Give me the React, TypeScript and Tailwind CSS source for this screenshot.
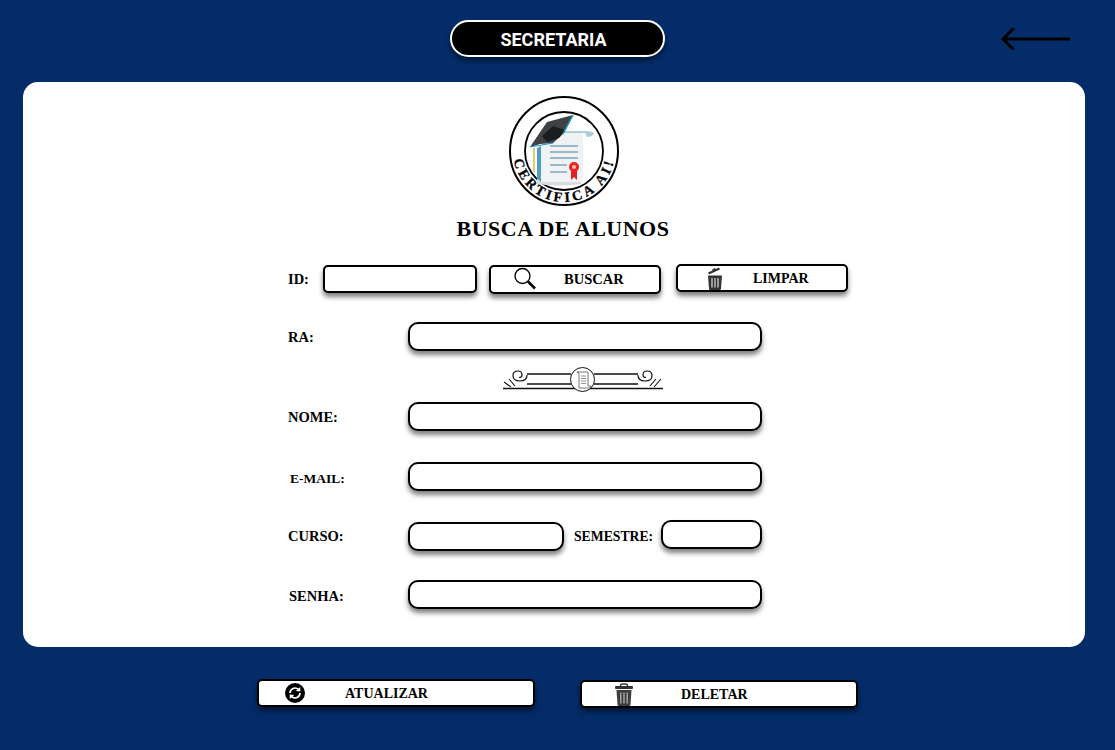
import React from 'react';

const serif = "font-['Liberation_Serif',serif] font-bold uppercase text-black";
const field = 'block bg-white border-2 border-black shadow-[0_4px_5px_rgba(0,0,0,0.5)] outline-none';

const Logo = () => (
    <svg width="110" height="110" viewBox="0 0 110 110" className="block ml-[2px]">
        <defs>
            <path id="ring" d="M 4.8 63.9 A 51 51 0 0 0 105.2 63.9" fill="none" />
        </defs>
        <circle cx="55" cy="55" r="54" fill="#fff" stroke="#000" strokeWidth="2" />
        <circle cx="55" cy="55" r="39" fill="#fff" stroke="#000" strokeWidth="1.8" />
        {/* pergaminho */}
        <path d="M28 83 L72 83 L72 88 Q50 91 28 88 Z" fill="#d9dbdc" />
        <path d="M39 36 L74 36 L74 86 L32 86 L32 50 Z" fill="#f0f2f3" />
        <path d="M40 35 L76 35 Q85 35 85 38 Q83 41 78 41 L76 37 L40 37 Z" fill="#a9cfdc" />
        <path d="M28 52 L28 82 L32 86 L32 50 Z" fill="#2f8fb0" opacity="0.85" />
        <path d="M25 52 L25 76" stroke="#d9b233" strokeWidth="1.4" />
        <path d="M41 50 H69 M41 56 H69 M41 62 H69 M41 69 H58 M41 76 H58" stroke="#7fa6bd" strokeWidth="1.3" />
        {/* selo */}
        <path d="M62 74 L62 84 L65 81 L68 84 L68 74 Z" fill="#d22" />
        <circle cx="65" cy="71" r="5" fill="#e22" />
        <circle cx="65" cy="71" r="2" fill="#f6c9b5" />
        {/* capelo */}
        <path d="M21 51 L38 26 L64 19 L54 38 L44 47 L31 48 Z" fill="#3f4144" />
        <path d="M33 40 L44 30 L56 34 L50 42 L38 46 Z" fill="#1c1d1f" />
        <path d="M64 19 L54 38" stroke="#1f9ac0" strokeWidth="1.6" />
        <path d="M21 51 L44 47" stroke="#1f9ac0" strokeWidth="1.2" />
        <text fontFamily="'Liberation Serif', serif" fontWeight="700" fontSize="14" fill="#000" stroke="#000" strokeWidth="0.3">
            <textPath href="#ring" textLength="139" lengthAdjust="spacing">CERTIFICA AI!</textPath>
        </text>
    </svg>
);

const Ornament = () => (
    <svg width="160" height="25" viewBox="0 0 160 25" className="block" fill="none" stroke="#111">
        <path d="M24 7 H68 M91 7 H135 M24 17 H68 M91 17 H135" strokeWidth="1.4" />
        <path d="M0 21.5 H160" strokeWidth="1.6" />
        <path d="M24 8 Q24 14 17 14 Q10 14 10 8.5 Q10 4 15 4 Q19 4 19 8 Q19 10.5 16 10.5" strokeWidth="1.2" />
        <path d="M135 8 Q135 14 142 14 Q149 14 149 8.5 Q149 4 144 4 Q140 4 140 8 Q140 10.5 143 10.5" strokeWidth="1.2" />
        <path d="M1 15 L8 20 M6 12 L12 19 M158 12 L151 20 M153 12 L147 19" strokeWidth="1.1" />
        <circle cx="79.5" cy="12.5" r="12" fill="#fff" strokeWidth="1" />
        <path d="M74 5 H85 V19 H88 Q88 21 86 21 H76 V7 Q76 5 74 5 Z" fill="#fff" stroke="#555" strokeWidth="0.8" />
        <path d="M78 9 H83 M78 11.5 H83 M78 14 H83 M78 16.5 H83" stroke="#777" strokeWidth="0.8" />
    </svg>
);

const SearchIcon = () => (
    <svg width="24" height="24" viewBox="0 0 24 24" fill="none" stroke="#000">
        <circle cx="9.5" cy="9" r="7.5" strokeWidth="1.3" />
        <path d="M15 14.5 L22 21.5" strokeWidth="2.6" />
    </svg>
);

const OpenTrash = () => (
    <svg width="18" height="24" viewBox="0 0 18 24">
        <path d="M2 6.5 L13 1.5 L14 3.4 L3 8.4 Z M6 3.5 L9 2 L9.8 3.4 L6.8 5 Z" fill="#333" />
        <path d="M2 9.5 H16 L15 23 Q15 24 14 24 H4 Q3 24 3 23 Z" fill="#333" />
        <path d="M6 12 V21.5 M9 12 V21.5 M12 12 V21.5" stroke="#fff" strokeWidth="1" />
    </svg>
);

const Trash = () => (
    <svg width="20" height="23" viewBox="0 0 20 23">
        <path d="M6.5 3 Q6.5 1 8.5 1 H11.5 Q13.5 1 13.5 3" fill="none" stroke="#333" strokeWidth="1.4" />
        <rect x="1" y="3" width="18" height="3" rx="1" fill="#333" />
        <path d="M2.5 7 H17.5 L16.5 21.5 Q16.4 23 15 23 H5 Q3.6 23 3.5 21.5 Z" fill="#3d3d3d" />
        <path d="M6.8 9.5 V20.5 M10 9.5 V20.5 M13.2 9.5 V20.5" stroke="#bbb" strokeWidth="1.2" />
    </svg>
);

const RefreshIcon = () => (
    <svg width="20" height="20" viewBox="0 0 20 20">
        <circle cx="10" cy="10" r="10" fill="#000" />
        <path d="M5 10 A5 5 0 0 1 13.4 6.4" fill="none" stroke="#fff" strokeWidth="1.7" />
        <path d="M15 10 A5 5 0 0 1 6.6 13.6" fill="none" stroke="#fff" strokeWidth="1.7" />
        <path d="M15.3 4 L15.3 8.6 L10.8 8 Z M4.7 16 L4.7 11.4 L9.2 12 Z" fill="#fff" />
    </svg>
);

const Row = ({ label, className, labelClass = 'pt-[2px] text-[14.5px]' }: { label: string; className: string; labelClass?: string }) => (
    <div className={`flex items-center ${className}`}>
        <span className={`${serif} w-[120px] leading-none ${labelClass}`}>{label}</span>
        <input className={`${field} w-[354px] h-[29px] rounded-[10px]`} />
    </div>
);

const App: React.FC = () => {
    return (
        <div className="w-[1115px] h-[750px] bg-[#032c69] overflow-hidden">
            {/* topo */}
            <header className="h-[82px] pt-[20px] grid grid-cols-[450px_215px_1fr]">
                <div />
                <div className="h-[37px] pr-[8px] pt-[2px] rounded-full bg-black border-2 border-white shadow-[0_4px_5px_rgba(0,0,0,0.45)] flex items-center justify-center font-['Roboto',sans-serif] font-bold text-[18px] text-white">
                    SECRETARIA
                </div>
                <div className="flex justify-end pr-[43px] pt-[6px]">
                    <svg width="71" height="24" viewBox="0 0 71 24" fill="none" stroke="#000" strokeWidth="3" strokeLinecap="round">
                        <path d="M2 13 H69" strokeLinecap="butt" />
                        <path d="M12 3 L2 13 L12 23" />
                    </svg>
                </div>
            </header>

            {/* formulario */}
            <main className="ml-[23px] w-[1062px] h-[565px] bg-white rounded-[15px] pt-[14px] pl-[265px]">
                <div className="w-[550px] flex flex-col items-center">
                    <Logo />
                    <h1 className={`${serif} mt-[10px] text-[22px] leading-[26px] tracking-[0.5px]`}>Busca de alunos</h1>
                </div>

                <div className="mt-[22px] flex items-center h-[30px]">
                    <span className={`${serif} w-[35px] text-[14.5px] leading-none`}>ID:</span>
                    <input className={`${field} w-[154px] h-[28px] rounded-[5px]`} />
                    <button className={`${field} ${serif} ml-[12px] w-[172px] h-[29px] rounded-[5px] flex items-center pl-[22px] text-[14.5px]`}>
                        <SearchIcon />
                        <span className="ml-[27px] pt-[2px]">Buscar</span>
                    </button>
                    <button className={`${field} ${serif} ml-[15px] mb-[2px] w-[172px] h-[28px] rounded-[5px] flex items-center pl-[28px] text-[14px]`}>
                        <OpenTrash />
                        <span className="ml-[29px]">Limpar</span>
                    </button>
                </div>

                <Row label="RA:" className="mt-[28px]" />
                <div className="ml-[215px] mt-[16px]">
                    <Ornament />
                </div>
                <Row label="Nome:" className="mt-[10px]" />
                <Row label="E-mail:" className="mt-[31px]" labelClass="pl-[2px] pt-[4px] text-[13.5px]" />

                <div className="mt-[29px] flex items-start h-[31px]">
                    <span className={`${serif} w-[120px] text-[14.5px] leading-[33px]`}>Curso:</span>
                    <input className={`${field} mt-[2px] w-[156px] h-[29px] rounded-[10px]`} />
                    <span className={`${serif} ml-[10px] w-[87px] text-[13.7px] leading-[33px] whitespace-nowrap`}>Semestre:</span>
                    <input className={`${field} w-[101px] h-[29px] rounded-[10px]`} />
                </div>

                <Row label="Senha:" className="mt-[29px]" labelClass="pl-[1px] pt-[4px] text-[14.5px]" />
            </main>

            {/* acoes */}
            <footer className="pt-[32px] pl-[257px] flex items-start gap-[45px]">
                <button className={`${field} ${serif} w-[278px] h-[28px] rounded-[5px] flex items-center pl-[26px] text-[14px] shadow-[0_3px_5px_rgba(0,0,0,0.6)]`}>
                    <RefreshIcon />
                    <span className="ml-[40px]">Atualizar</span>
                </button>
                <button className={`${field} ${serif} mt-[1px] w-[278px] h-[28px] rounded-[5px] flex items-center pl-[32px] text-[14px] shadow-[0_3px_5px_rgba(0,0,0,0.6)]`}>
                    <Trash />
                    <span className="ml-[47px]">Deletar</span>
                </button>
            </footer>
        </div>
    );
};

export default App;
